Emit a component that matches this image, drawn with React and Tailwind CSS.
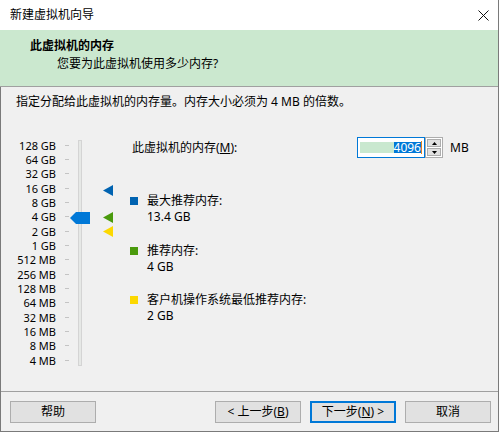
import React from 'react';

const font = '"Segoe UI", "Noto Sans", "Noto Sans CJK SC", sans-serif';

const levels = [
  '128 GB', '64 GB', '32 GB', '16 GB', '8 GB', '4 GB', '2 GB', '1 GB',
  '512 MB', '256 MB', '128 MB', '64 MB', '32 MB', '16 MB', '8 MB', '4 MB',
];

const legend = [
  { color: 'bg-[#0063b1]', label: '最大推荐内存:', value: '13.4 GB', mt: 'mt-[35px]' },
  { color: 'bg-[#4a9a0c]', label: '推荐内存:', value: '4 GB', mt: 'mt-[18px]' },
  { color: 'bg-[#fcd800]', label: '客户机操作系统最低推荐内存:', value: '2 GB', mt: 'mt-[17px]' },
];

const Triangle = ({ color, top }) => (
  <svg
    width="10"
    height="11"
    viewBox="0 0 10 11"
    className="absolute left-[102px]"
    style={{ top }}
  >
    <polygon points="0,5.5 10,0 10,11" fill={color} />
  </svg>
);

const Button = ({ children, focused }) => (
  <button
    className={`w-[86px] h-[22px] flex items-center justify-center text-[12px] leading-none text-black bg-[#e1e1e1] ${
      focused ? 'border-2 border-[#0078d7]' : 'border border-[#adadad]'
    }`}
  >
    {children}
  </button>
);

export default function App() {
  return (
    <div
      className="w-[499px] h-[432px] flex flex-col bg-[#f0f0f0] border-r border-b border-[#7a7a7a] text-black"
      style={{ fontFamily: font }}
    >
      {/* title bar */}
      <div className="h-[30px] bg-white flex items-center justify-between pl-[10px] pr-[9px]">
        <span className="text-[12px] leading-none">新建虚拟机向导</span>
        <svg width="11" height="11" viewBox="0 0 11 11">
          <path d="M0.5 0.5 L10.5 10.5 M10.5 0.5 L0.5 10.5" stroke="#111" strokeWidth="1" />
        </svg>
      </div>

      {/* header */}
      <div className="h-[57px] bg-[#cbe8cf] border-b border-[#a0a0a0] pl-[30px] pt-[8px]">
        <div className="h-[16px] flex items-center text-[12px] font-bold leading-none">此虚拟机的内存</div>
        <div className="h-[17px] mt-px pl-[27px] flex items-center text-[12px] leading-none">
          您要为此虚拟机使用多少内存?
        </div>
      </div>

      {/* body */}
      <div className="flex-1 flex flex-col border-l border-[#7a7a7a]">
        <div className="h-[23px] pt-[7px] pl-[15px] flex items-center text-[12px] leading-none">
          指定分配给此虚拟机的内存量。内存大小必须为 4 MB 的倍数。
        </div>

        <div className="h-[281px] flex">
          {/* slider */}
          <div className="relative w-[128px] flex">
            <div className="pt-[28px] flex flex-col">
              {levels.map((l) => (
                <div key={l} className="h-[14.33px] flex items-center">
                  <span className="w-[55px] text-right text-[11px] leading-none">{l}</span>
                  <span className="ml-[9px] w-[4px] h-px bg-[#c4c4c4]" />
                </div>
              ))}
            </div>
            <div className="ml-[9px] mt-[30px] w-[4px] h-[226px] border border-[#d4d4d4] bg-[#e6e8e6]" />

            <svg width="20" height="12" viewBox="0 0 20 12" className="absolute left-[69px] top-[102px]">
              <polygon points="0,6 6,0 20,0 20,12 6,12" fill="#0078d7" />
            </svg>
            <Triangle color="#0063b1" top={75} />
            <Triangle color="#4a9a0c" top={102} />
            <Triangle color="#fcd800" top={116} />
          </div>

          {/* right side */}
          <div className="flex-1 flex flex-col">
            <div className="mt-[27px] h-[21px] flex items-center">
              <span className="w-[228px] pl-[3px] text-[12px] leading-none">
                此虚拟机的内存(<u>M</u>):
              </span>
              <div className="w-[68px] h-[21px] border border-[#0078d7] bg-white flex items-center pl-[2px]">
                <div className="w-[34px] h-[11px] bg-[#c9e8cf]" />
                <div className="h-[11px] w-[27px] bg-[#0078d7] text-white text-[12px] leading-[11px] flex items-center justify-end">
                  4096
                </div>
                <div className="w-px h-[13px] bg-[#e08020]" />
              </div>
              <div className="w-[18px] h-[21px] flex flex-col gap-px border border-[#adadad] bg-white p-px">
                <div className="flex-1 bg-[#e1e1e1] border border-[#adadad] flex items-center justify-center">
                  <svg width="5" height="3" viewBox="0 0 5 3">
                    <polygon points="2.5,0 5,3 0,3" fill="#000" />
                  </svg>
                </div>
                <div className="flex-1 bg-[#e1e1e1] border border-[#adadad] flex items-center justify-center">
                  <svg width="5" height="3" viewBox="0 0 5 3">
                    <polygon points="0,0 5,0 2.5,3" fill="#000" />
                  </svg>
                </div>
              </div>
              <span className="ml-[7px] text-[12px] leading-none">MB</span>
            </div>

            {legend.map((item) => (
              <div key={item.label} className={`${item.mt} flex`}>
                <span className={`mt-[4px] ml-px w-[8px] h-[8px] ${item.color}`} />
                <div className="ml-[9px] flex flex-col">
                  <span className="h-[16px] flex items-center text-[12px] leading-none">{item.label}</span>
                  <span className="h-[16px] flex items-center text-[12px] leading-none">{item.value}</span>
                </div>
              </div>
            ))}
          </div>
        </div>

        {/* footer */}
        <div className="flex-1 border-t border-[#a0a0a0] flex items-start pt-[9px] pl-[9px] pr-[7px]">
          <Button>帮助</Button>
          <div className="ml-auto flex gap-[9px]">
            <Button>&lt; 上一步(<u>B</u>)</Button>
            <Button focused>
              下一步(<u>N</u>) &gt;
            </Button>
            <Button>取消</Button>
          </div>
        </div>
      </div>
    </div>
  );
}
